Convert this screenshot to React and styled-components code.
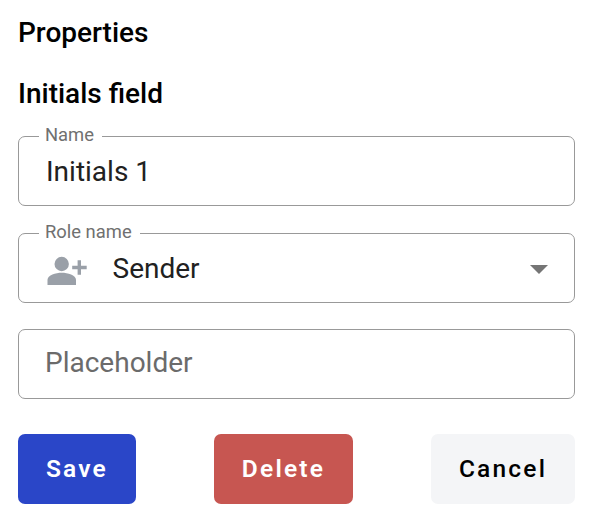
import React from 'react';
import styled, { createGlobalStyle } from 'styled-components';

const GlobalStyle = createGlobalStyle`
  * { box-sizing: border-box; }
  body { margin: 0; background: #fff; font-family: Roboto, sans-serif; }
`;

const Panel = styled.main`
  width: 596px;
  height: 521px;
  padding: 17px 21px 0 18px;
  display: flex;
  flex-direction: column;
`;

const Title = styled.h2`
  margin: 0;
  height: 32px;
  font-size: 28px;
  line-height: 32px;
  font-weight: 500;
  color: #000;
`;

const Subtitle = styled(Title)`
  margin-top: 29px;
`;

const Fields = styled.div`
  margin-top: 16px;
  display: flex;
  flex-direction: column;
  gap: 17px;
`;

const Field = styled.fieldset`
  margin: 0;
  min-width: 0;
  height: 80px;
  padding: 0 26px 0 27px;
  border: 1px solid #999;
  border-radius: 7px;
`;

const Legend = styled.legend`
  margin-left: -7px;
  padding: 0 8px 0 6px;
  height: 20px;
  font-size: 18.4px;
  line-height: 18px;
  color: #707070;
`;

const Value = styled.div`
  height: 50px;
  display: flex;
  align-items: center;
  font-size: 28px;
  color: #212121;
`;

const PlaceholderField = styled.div`
  margin-top: 9px;
  height: 70px;
  padding: 0 26px 4px;
  display: flex;
  align-items: center;
  border: 1px solid #999;
  border-radius: 7px;
  font-size: 28px;
  color: #6b6b6b;
`;

const PersonIcon = styled.svg`
  width: 42px;
  height: 36px;
  margin-right: 24.5px;
`;

const Arrow = styled.svg`
  margin: 2px 0 0 auto;
  width: 18px;
  height: 9px;
`;

const Actions = styled.div`
  margin-top: 35px;
  display: flex;
  justify-content: space-between;
`;

const Button = styled.button`
  width: ${(p) => p.$width}px;
  height: 70px;
  padding: 0;
  border: 0;
  border-radius: 7px;
  background: ${(p) => p.$background};
  color: ${(p) => p.$color};
  font: ${(p) => p.$weight || 500} 24.5px/70px Roboto, sans-serif;
  letter-spacing: 2.2px;
`;

export default function App() {
  return (
    <>
      <GlobalStyle />
      <Panel>
        <Title>Properties</Title>
        <Subtitle>Initials field</Subtitle>
        <Fields>
          <Field>
            <Legend>Name</Legend>
            <Value>Initials 1</Value>
          </Field>
          <Field>
            <Legend>Role name</Legend>
            <Value>
              <PersonIcon viewBox="0 0 42 36" fill="#9aa0a8">
                <circle cx="15.7" cy="14" r="7.2" />
                <path d="M1.5 35v-5.2c0-4.8 8.3-7.1 14.2-7.1s14.3 2.3 14.3 7.1v5.2z" />
                <path d="M31.6 10.2h3.4v5.6h5.7v3.4h-5.7v5.6h-3.4v-5.6h-5.4v-3.4h5.4z" />
              </PersonIcon>
              Sender
              <Arrow viewBox="0 0 18 9" fill="#757575"><path d="M0 0h18L9 9z" /></Arrow>
            </Value>
          </Field>
          <PlaceholderField>Placeholder</PlaceholderField>
        </Fields>
        <Actions>
          <Button $width={118} $background="#2a46c8" $color="#fff" $weight={600}>Save</Button>
          <Button $width={139} $background="#c75651" $color="#fff" $weight={600}>Delete</Button>
          <Button $width={144} $background="#f4f5f7" $color="#000">Cancel</Button>
        </Actions>
      </Panel>
    </>
  );
}
